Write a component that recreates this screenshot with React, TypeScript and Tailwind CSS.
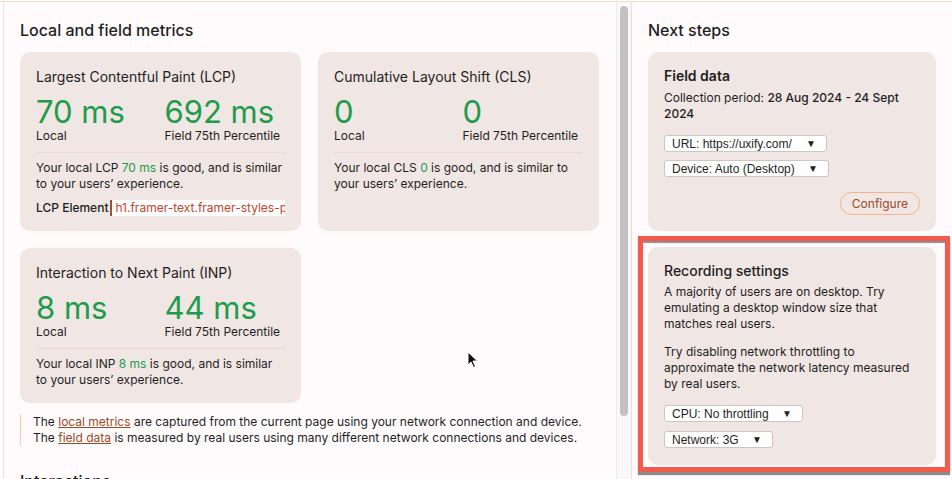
import React from 'react';

const GREEN = 'text-[#1e9b4b]';

function Metric({ value, label }: { value: string; label: string }) {
  return (
    <div>
      <div className={`text-[31px] leading-[32px] ${GREEN}`}>{value}</div>
      <div className="text-xs leading-4">{label}</div>
    </div>
  );
}

function MetricCard({
  title,
  local,
  field,
  children,
}: {
  title: string;
  local: string;
  field: string;
  children: React.ReactNode;
}) {
  return (
    <div className="rounded-[10px] bg-[#f0e6e3] px-4 pt-4 pb-[15px]">
      <div className="text-sm leading-[18px]">{title}</div>
      <div className="mt-[10px] grid grid-cols-2 gap-2">
        <Metric value={local} label="Local" />
        <Metric value={field} label="Field 75th Percentile" />
      </div>
      <div className="mt-2 border-t border-[#f5d6c2] pt-[7px] text-xs leading-4">{children}</div>
    </div>
  );
}

function FakeSelect({ label, width }: { label: string; width: string }) {
  return (
    <div
      className={`${width} h-[17px] flex items-center justify-between rounded-[3px] border border-[#cfc6c2] bg-white pl-[7px] pr-[10px] font-['Liberation_Sans',Arial,sans-serif] text-[12px] leading-none text-[#1f1f1f]`}
    >
      <span>{label}</span>
      <span className="text-[10px]">▼</span>
    </div>
  );
}

export default function App() {
  return (
    <div className="relative h-[479px] w-[952px] overflow-hidden bg-white pt-px font-['Inter',sans-serif] text-[#1f1f1f]">
      <div className="flex h-full border-t border-[#f7ddd0]">
        {/* ── Left: metrics ─────────────────────────────────────────── */}
        <div className="ml-[3px] w-[613px] shrink-0 border-l border-[#efe1d9] bg-[#fffbfd] pl-4 pr-[17px] pt-[18px]">
          <h2 className="text-base leading-5 font-medium">Local and field metrics</h2>

          <div className="mt-3 grid grid-cols-2 gap-[17px]">
            <MetricCard title="Largest Contentful Paint (LCP)" local="70 ms" field="692 ms">
              <p>
                Your local LCP <span className={GREEN}>70 ms</span> is good, and is similar to your users’
                experience.
              </p>
              <div className="mt-2 flex items-center whitespace-nowrap">
                <span className="font-medium">LCP Element</span>
                <span className="ml-[2px] overflow-hidden border-l-2 border-[#a0522d] bg-white pl-[3px] text-[#c4452c]">
                  h1.framer-text.framer-styles-preset-1a2b3c4
                </span>
              </div>
            </MetricCard>

            <MetricCard title="Cumulative Layout Shift (CLS)" local="0" field="0">
              <p>
                Your local CLS <span className={GREEN}>0</span> is good, and is similar to your users’
                experience.
              </p>
            </MetricCard>

            <MetricCard title="Interaction to Next Paint (INP)" local="8 ms" field="44 ms">
              <p>
                Your local INP <span className={GREEN}>8 ms</span> is good, and is similar to your users’
                experience.
              </p>
            </MetricCard>
          </div>

          <div className="mt-[11px] border-l border-[#f5cfb0] pl-3 text-xs leading-4">
            <p>
              The <span className="text-[#9a4a1f] underline">local metrics</span> are captured from the current page
              using your network connection and device.
            </p>
            <p>
              The <span className="text-[#9a4a1f] underline">field data</span> is measured by real users using many
              different network connections and devices.
            </p>
          </div>

          <h2 className="mt-[25px] text-base leading-5 font-medium">Interactions</h2>
        </div>

        {/* Scrollbar */}
        <div className="w-[15px] shrink-0 border-l border-[#ebebeb] bg-[#f8f8f8] pl-[3px] pt-1">
          <div className="h-[410px] w-2 rounded-full bg-[#c2c2c2]" />
        </div>

        {/* ── Right: next steps ─────────────────────────────────────── */}
        <div className="flex-1 border-l border-[#f5dccf] bg-[#fffbfd] px-4 pt-[18px]">
          <h2 className="text-base leading-5 font-medium">Next steps</h2>

          <div className="mt-3 rounded-[10px] bg-[#f0e6e3] px-4 pt-[15px] pb-4">
            <div className="text-sm leading-[18px] font-semibold">Field data</div>
            <p className="mt-[5px] text-xs leading-4">
              Collection period: <span className="font-medium">28 Aug 2024 - 24 Sept 2024</span>
            </p>
            <div className="mt-[13px] flex flex-col gap-2">
              <FakeSelect label="URL: https://uxify.com/" width="w-[163px]" />
              <FakeSelect label="Device: Auto (Desktop)" width="w-[165px]" />
            </div>
            <div className="mt-[15px] flex justify-end">
              <button className="h-[23px] rounded-full border border-[#f5b48a] px-[11px] text-xs text-[#9a4a1f]">
                Configure
              </button>
            </div>
          </div>

          {/* Highlighted card */}
          <div className="-ml-[10px] -mr-[14px] mt-[5px] border-[5px] border-[#f25a4b] pl-[5px] pr-[9px] pt-[6px] pb-[2px] shadow-[inset_0_2px_1px_rgba(0,0,0,0.45),0_3px_1px_rgba(0,0,0,0.45)]">
            <div className="rounded-[10px] bg-[#f0e6e3] px-4 pt-[15px] pb-[17px]">
              <div className="text-sm leading-[18px] font-medium">Recording settings</div>
              <p className="mt-1 text-xs leading-4">
                A majority of users are on desktop. Try emulating a desktop window size that matches real users.
              </p>
              <p className="mt-3 text-xs leading-4">
                Try disabling network throttling to approximate the network latency measured by real users.
              </p>
              <div className="mt-[13px] flex flex-col gap-[9px]">
                <FakeSelect label="CPU: No throttling" width="w-[139px]" />
                <FakeSelect label="Network: 3G" width="w-[109px]" />
              </div>
            </div>
          </div>
        </div>
      </div>

      {/* Mouse pointer */}
      <svg className="absolute left-[467px] top-[351px]" width="12" height="18" viewBox="0 0 12 18">
        <path d="M1 1 L1 14 L4 11 L6.5 16.5 L8.5 15.5 L6 10 L10.5 10 Z" fill="#111" stroke="#fff" strokeWidth="1" />
      </svg>
    </div>
  );
}
